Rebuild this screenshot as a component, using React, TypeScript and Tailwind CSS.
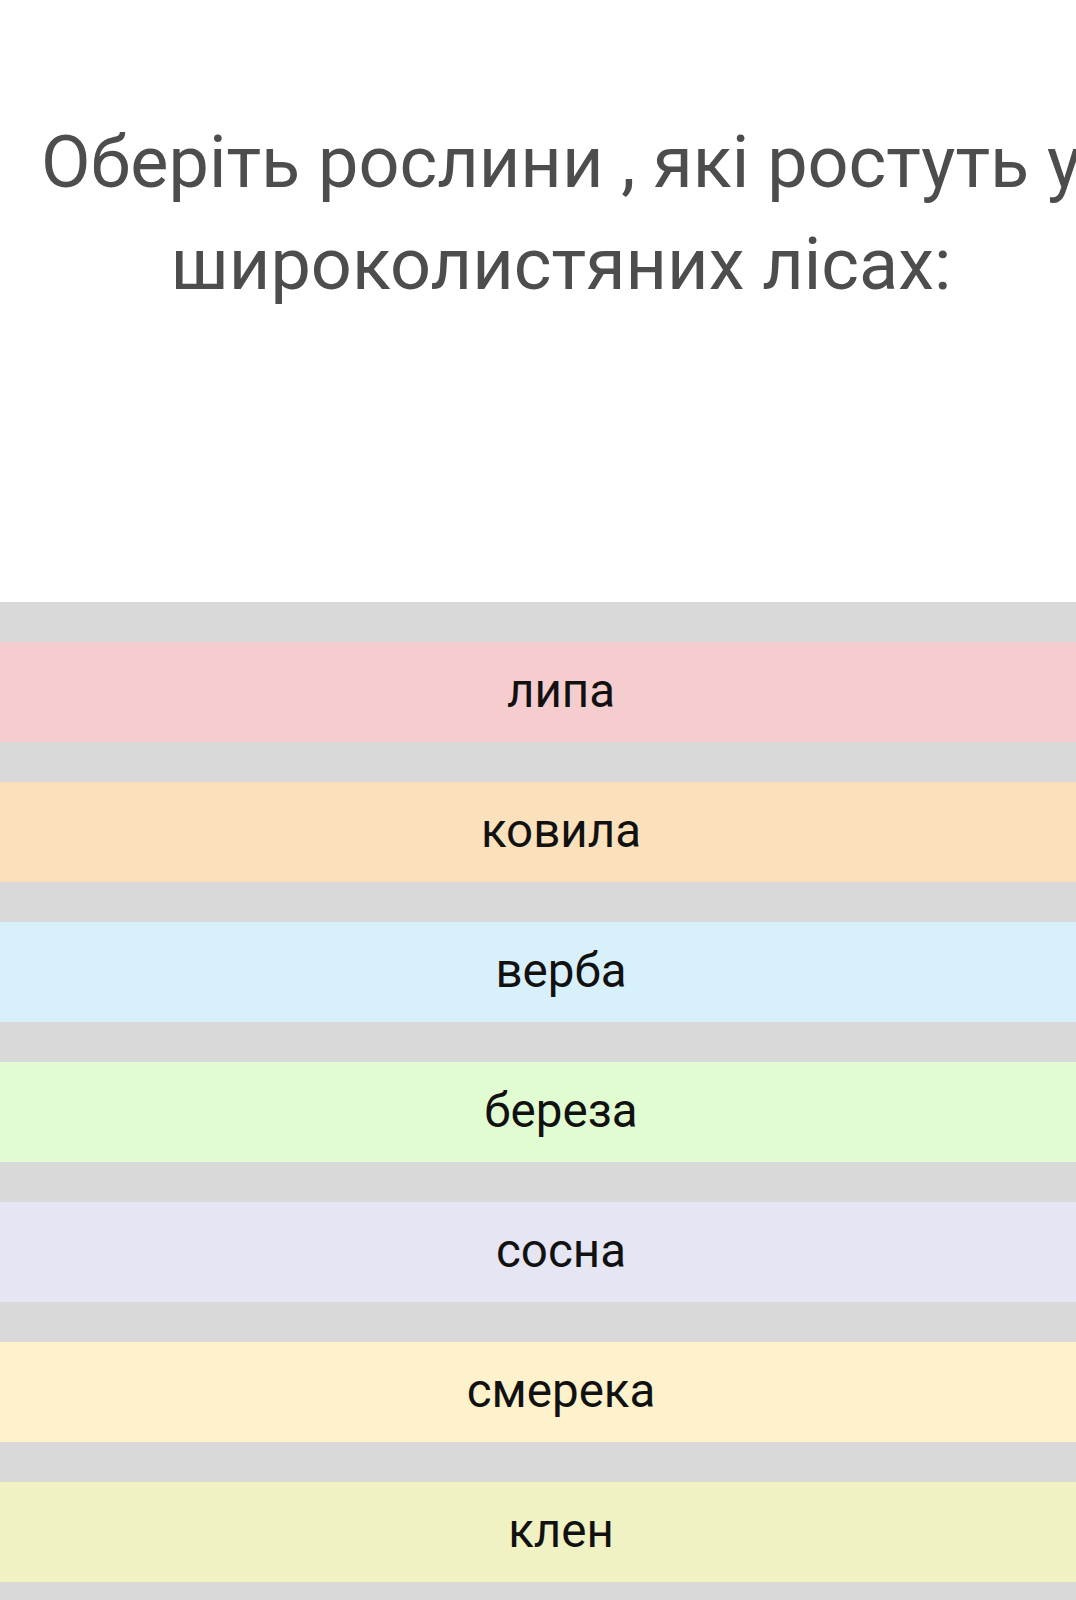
import React from "react";

const items = [
  { t: "липа", c: "bg-[#f6cdce]" },
  { t: "ковила", c: "bg-[#fae1bb]" },
  { t: "верба", c: "bg-[#d8f0f9]" },
  { t: "береза", c: "bg-[#e0fcd0]" },
  { t: "сосна", c: "bg-[#e5e5f3]" },
  { t: "смерека", c: "bg-[#fdf2cb]" },
  { t: "клен", c: "bg-[#f0f2c4]" },
];

export default function App() {
  return (
    <div className="w-[1076px] h-[1600px] overflow-hidden bg-white" style={{ fontFamily: "Roboto, 'Noto Sans', sans-serif" }}>
      <div className="w-[1122px]">
        <div className="pt-[112px] h-[602px]">
          <h1 className="text-[72px] leading-[102px] text-center text-[#4d4d4d] font-normal">
            Оберіть рослини , які ростуть у широколистяних лісах:
          </h1>
        </div>
        <div className="bg-[#d9d9d9] pt-[40px] flex flex-col gap-[40px] pb-[40px]">
          {items.map((it) => (
            <div key={it.t} className={`${it.c} h-[100px] flex items-center justify-center text-[47.5px] text-[#111111]`}>
              {it.t}
            </div>
          ))}
        </div>
      </div>
    </div>
  );
}
